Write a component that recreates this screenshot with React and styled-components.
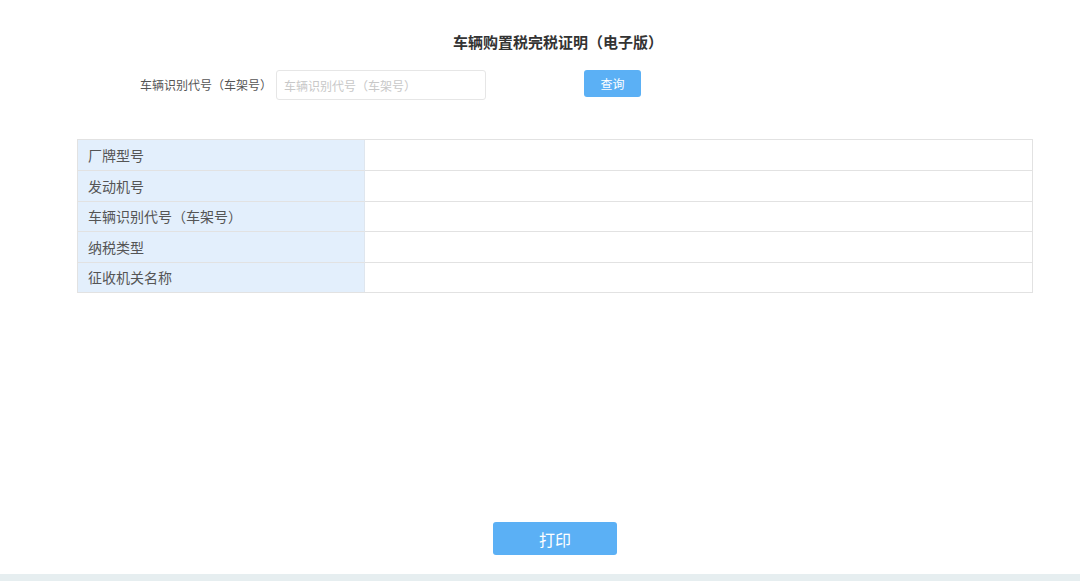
import React from "react";
import styled, { createGlobalStyle } from "styled-components";

const Global = createGlobalStyle`
  html, body { margin: 0; padding: 0; background: #ffffff; }
  body { font-family: "Noto Sans CJK SC", "Noto Sans", "Liberation Sans", sans-serif; }
  * { box-sizing: border-box; }
`;

const Page = styled.div`
  width: 1080px;
  height: 581px;
  display: flex;
  flex-direction: column;
  background: #ffffff;
  overflow: hidden;
`;

const Main = styled.div`
  flex: 1;
  display: flex;
  flex-direction: column;
`;

const Title = styled.h1`
  margin: 0;
  padding: 31px 0 0 36px;
  text-align: center;
  font-size: 15px;
  line-height: 22px;
  font-weight: 700;
  color: #333;
`;

const SearchRow = styled.div`
  display: flex;
  align-items: flex-start;
  margin-top: 17px;
  padding-left: 140px;
`;

const Label = styled.label`
  font-size: 12px;
  color: #555;
  line-height: 30px;
  width: 136px;
`;

const Input = styled.input`
  width: 210px;
  height: 30px;
  border: 1px solid #e6e6e6;
  border-radius: 3px;
  padding: 0 7px;
  font-size: 12px;
  font-family: inherit;
  color: #555;
  outline: none;
  &::placeholder { color: #c8c8c8; }
`;

const Button = styled.button`
  border: none;
  border-radius: 3px;
  background: #5bb0f5;
  color: #fff;
  font-family: inherit;
  cursor: pointer;
  width: ${(p) => p.$w}px;
  height: ${(p) => p.$h}px;
  font-size: ${(p) => p.$fs}px;
  padding: 0;
`;

const QueryButton = styled(Button)`
  margin-left: 98px;
`;

const Table = styled.div`
  margin: 39px 0 0 77px;
  width: 956px;
  border: 1px solid #e2e2e2;
  display: grid;
  grid-template-columns: 287px 1fr;
`;

const Cell = styled.div`
  height: 30.4px;
  display: flex;
  align-items: center;
  font-size: 14px;
  color: #555;
  border-top: ${(p) => (p.$first ? "none" : "1px solid #e2e2e2")};
  ${(p) =>
    p.$head
      ? `background: #e3effc; padding-left: 10px; border-right: 1px solid #dfe6ee;`
      : `background: #fff;`}
`;

const Footer = styled.div`
  display: flex;
  justify-content: center;
  padding: 0 0 19px 30px;
`;

const Strip = styled.div`
  height: 7px;
  background: #e6eef0;
`;

const rows = ["厂牌型号", "发动机号", "车辆识别代号（车架号）", "纳税类型", "征收机关名称"];

export default function App() {
  return (
    <Page>
      <Global />
      <Main>
        <Title>车辆购置税完税证明（电子版）</Title>
        <SearchRow>
          <Label>车辆识别代号（车架号）</Label>
          <Input placeholder="车辆识别代号（车架号）" />
          <QueryButton $w={57} $h={27} $fs={12}>查询</QueryButton>
        </SearchRow>
        <Table>
          {rows.map((r, i) => (
            <React.Fragment key={r}>
              <Cell $head $first={i === 0}>{r}</Cell>
              <Cell $first={i === 0} />
            </React.Fragment>
          ))}
        </Table>
      </Main>
      <Footer>
        <Button $w={124} $h={33} $fs={16}>打印</Button>
      </Footer>
      <Strip />
    </Page>
  );
}
